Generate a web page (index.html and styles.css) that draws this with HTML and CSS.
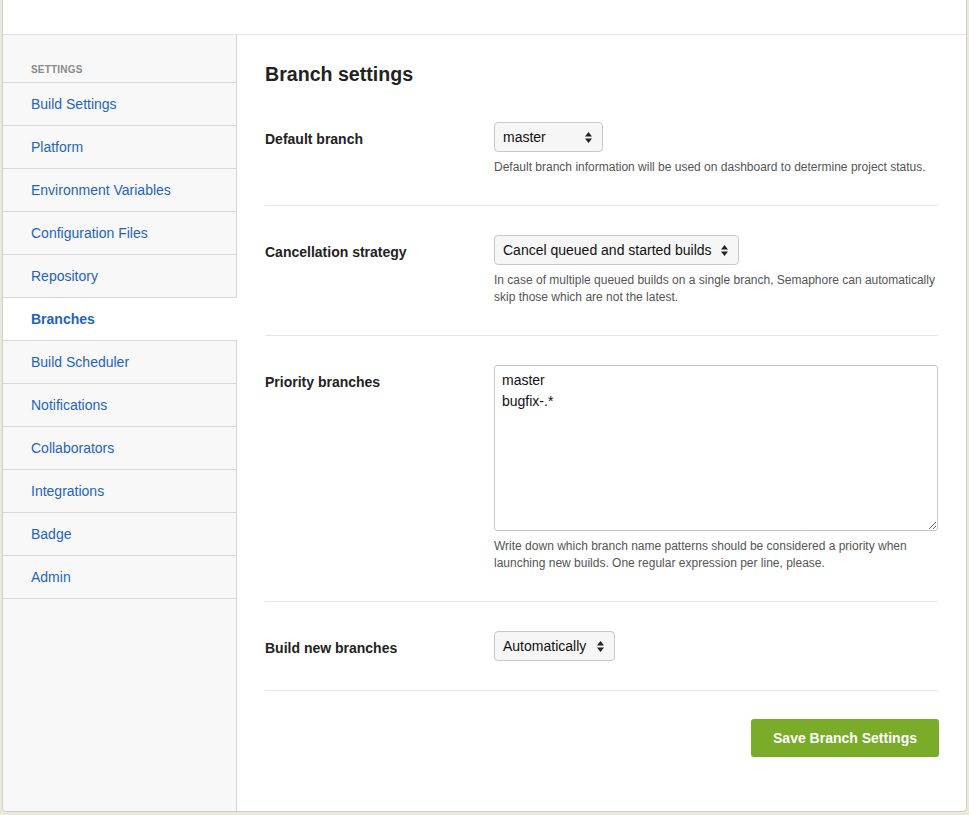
FILE: index.html
```html
<!DOCTYPE html>
<html>
<head>
<meta charset="utf-8">
<link rel="stylesheet" href="styles.css">
</head>
<body>
<div class="card">
  <div class="topbar"></div>
  <div class="layout">
    <nav class="sidebar">
      <div class="side-title">SETTINGS</div>
      <a class="side-item" href="#">Build Settings</a>
      <a class="side-item" href="#">Platform</a>
      <a class="side-item" href="#">Environment Variables</a>
      <a class="side-item" href="#">Configuration Files</a>
      <a class="side-item" href="#">Repository</a>
      <a class="side-item active" href="#">Branches</a>
      <a class="side-item" href="#">Build Scheduler</a>
      <a class="side-item" href="#">Notifications</a>
      <a class="side-item" href="#">Collaborators</a>
      <a class="side-item" href="#">Integrations</a>
      <a class="side-item" href="#">Badge</a>
      <a class="side-item last" href="#">Admin</a>
    </nav>
    <main class="main">
      <h1 class="title">Branch settings</h1>

      <div class="row">
        <label class="label">Default branch</label>
        <div class="control">
          <div class="select w-master">
            <span>master</span>
            <svg class="arrows" width="7" height="11" viewBox="0 0 7 11"><path d="M3.5 0L7 4.5H0z M3.5 11L0 6.5H7z" fill="#222"/></svg>
          </div>
          <p class="help">Default branch information will be used on dashboard to determine project status.</p>
        </div>
      </div>

      <div class="row">
        <label class="label">Cancellation strategy</label>
        <div class="control">
          <div class="select w-cancel">
            <span>Cancel queued and started builds</span>
            <svg class="arrows" width="7" height="11" viewBox="0 0 7 11"><path d="M3.5 0L7 4.5H0z M3.5 11L0 6.5H7z" fill="#222"/></svg>
          </div>
          <p class="help">In case of multiple queued builds on a single branch, Semaphore can automatically skip those which are not the latest.</p>
        </div>
      </div>

      <div class="row">
        <label class="label">Priority branches</label>
        <div class="control">
          <textarea class="textarea">master
bugfix-.*</textarea>
          <p class="help">Write down which branch name patterns should be considered a priority when launching new builds. One regular expression per line, please.</p>
        </div>
      </div>

      <div class="row">
        <label class="label">Build new branches</label>
        <div class="control">
          <div class="select w-auto">
            <span>Automatically</span>
            <svg class="arrows" width="7" height="11" viewBox="0 0 7 11"><path d="M3.5 0L7 4.5H0z M3.5 11L0 6.5H7z" fill="#222"/></svg>
          </div>
        </div>
      </div>

      <div class="actions">
        <button class="btn">Save Branch Settings</button>
      </div>
    </main>
  </div>
</div>
</body>
</html>
```

FILE: styles.css
```css
* { box-sizing: border-box; }
html, body { margin: 0; padding: 0; }
body {
  background: #eae9dd;
  font-family: "Liberation Sans", Arial, sans-serif;
  color: #222;
  height: 815px;
  overflow: hidden;
}
.card {
  margin: 0 2px;
  height: 812px;
  background: #fff;
  border: 1px solid #cfcfc8;
  border-top: none;
  border-radius: 0 0 5px 5px;
  display: flex;
  flex-direction: column;
  overflow: hidden;
}
.topbar {
  height: 35px;
  border-bottom: 1px solid #e6e6e6;
  flex: none;
}
.layout {
  flex: 1;
  display: flex;
}
.sidebar {
  width: 234px;
  flex: none;
  background: #f8f8f8;
  border-right: 1px solid #d4d4d4;
  display: flex;
  flex-direction: column;
}
.side-title {
  padding: 28px 28px 6px;
  font-size: 10px;
  line-height: 13px;
  font-weight: bold;
  color: #8a8a8a;
  letter-spacing: 0.2px;
}
.side-item {
  display: block;
  border-top: 1px solid #d9d9d9;
  height: 43px;
  line-height: 42px;
  padding-left: 28px;
  font-size: 14px;
  color: #1e63c0;
  text-decoration: none;
}
.side-item.last { border-bottom: 1px solid #d9d9d9; height: 44px; }
.side-item.active {
  background: #fff;
  font-weight: bold;
  margin-right: -1px;
}
.main {
  flex: 1;
  padding: 27px 28px 0 28px;
}
.title {
  margin: 0 0 7px;
  font-size: 19.6px;
  line-height: 24px;
  font-weight: bold;
  color: #222;
}
.row {
  display: flex;
  padding: 29px 0 29px;
  border-bottom: 1px solid #e6e6e6;
}
.label {
  width: 229px;
  flex: none;
  font-size: 14px;
  font-weight: bold;
  line-height: 26px;
  padding-top: 4px;
  color: #222;
}
.control { flex: 1; }
.select {
  position: relative;
  height: 30px;
  border: 1px solid #c9c9c9;
  border-radius: 4px;
  background: #f6f6f6;
  font-size: 14px;
  line-height: 28px;
  padding-left: 8px;
  color: #111;
}
.arrows { position: absolute; right: 10px; top: 9px; }
.w-master { width: 109px; }
.w-cancel { width: 245px; }
.w-auto { width: 121px; }
.help {
  margin: 7px 0 0;
  font-size: 12px;
  line-height: 17px;
  color: #555;
}
.textarea {
  display: block;
  width: 100%;
  height: 166px;
  border: 1px solid #c4c4c4;
  border-radius: 3px;
  padding: 4px 7px;
  font-family: "Liberation Sans", Arial, sans-serif;
  font-size: 14px;
  line-height: 21px;
  color: #111;
  resize: vertical;
}
.actions {
  display: flex;
  justify-content: flex-end;
  padding-top: 28px;
  margin-right: -1px;
}
.btn {
  width: 188px;
  height: 38px;
  border: none;
  border-radius: 3px;
  background: #7aab29;
  color: #fff;
  font-family: "Liberation Sans", Arial, sans-serif;
  font-size: 14px;
  font-weight: bold;
}
```
